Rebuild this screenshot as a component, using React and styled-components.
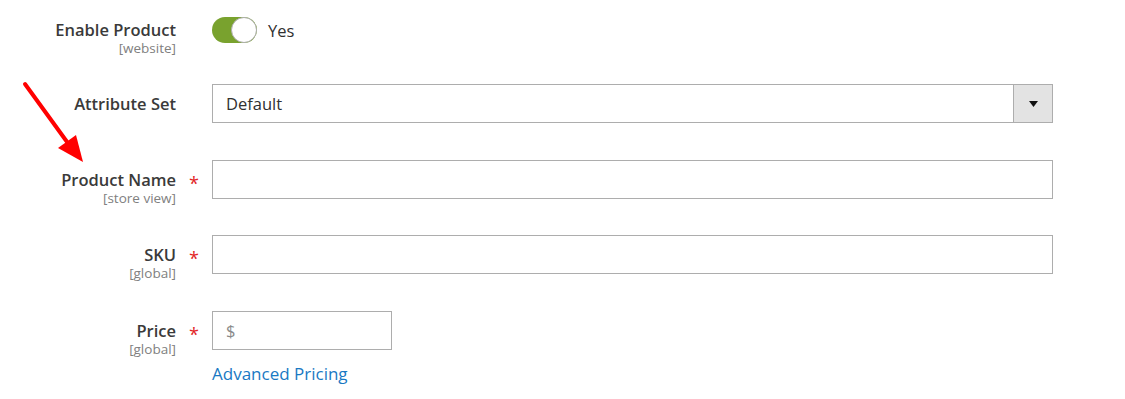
import React from "react";
import styled, { createGlobalStyle } from "styled-components";

const GlobalStyle = createGlobalStyle`
  body {
    margin: 0;
    background: #ffffff;
    font-family: "Open Sans", "Liberation Sans", sans-serif;
    color: #303030;
  }
`;

const Page = styled.div`
  position: relative;
  width: 1125px;
  height: 399px;
  padding-top: 11px;
  box-sizing: border-box;
  overflow: hidden;
`;

const Row = styled.div`
  display: grid;
  grid-template-columns: 176px 36px 841px;
  align-items: start;
  height: 38px;
  margin-bottom: ${(p) => p.gap ?? 38}px;
`;

const LabelBox = styled.div`
  display: flex;
  flex-direction: column;
  align-items: flex-end;
  text-align: right;
  padding-top: ${(p) => p.top || 8}px;
`;

const LabelText = styled.span`
  font-size: 16.5px;
  font-weight: 600;
  line-height: 22px;
  color: #3a3a3a;
`;

const Scope = styled.span`
  font-size: 13.5px;
  line-height: 14px;
  color: #808080;
`;

const Required = styled.span`
  color: #e22626;
  font-size: 18px;
  line-height: 22px;
  padding-top: 12px;
  padding-left: 13px;
`;

const Control = styled.div`
  display: flex;
  flex-direction: column;
  align-items: flex-start;
`;

const ToggleWrap = styled.div`
  display: flex;
  align-items: center;
  gap: 11px;
  height: 38px;
`;

const Track = styled.div`
  width: 45px;
  height: 26px;
  border-radius: 13px;
  background: #79a22e;
  position: relative;
  box-sizing: border-box;
`;

const Knob = styled.div`
  position: absolute;
  right: 0;
  top: 0;
  width: 26px;
  height: 26px;
  border-radius: 50%;
  background: #ffffff;
  border: 1px solid #adadad;
  box-sizing: border-box;
`;

const ToggleText = styled.span`
  font-size: 16.5px;
  color: #303030;
`;

const Input = styled.div`
  width: ${(p) => p.width || 841}px;
  height: 39px;
  box-sizing: border-box;
  border: 1px solid #adadad;
  background: #ffffff;
  display: flex;
  align-items: center;
  font-size: 16.5px;
  color: ${(p) => (p.muted ? "#8a8a8a" : "#303030")};
  padding-left: 13px;
`;

const SelectBox = styled(Input)`
  padding-left: 0;
  justify-content: space-between;
`;

const SelectValue = styled.span`
  padding-left: 13px;
`;

const SelectButton = styled.div`
  width: 38px;
  height: 100%;
  background: #e3e3e3;
  border-left: 1px solid #adadad;
  display: flex;
  align-items: center;
  justify-content: center;
`;

const Link = styled.a`
  margin-top: 12px;
  font-size: 17px;
  color: #1979c3;
  text-decoration: none;
`;

const Arrow = styled.svg`
  position: absolute;
  left: 20px;
  top: 78px;
`;

function Label({ text, scope, top }) {
  return (
    <LabelBox top={top}>
      <LabelText>{text}</LabelText>
      {scope && <Scope>{scope}</Scope>}
    </LabelBox>
  );
}

export default function App() {
  return (
    <Page>
      <GlobalStyle />
      <Row gap={35}>
        <Label text="Enable Product" scope="[website]" top={8} />
        <span />
        <Control>
          <ToggleWrap>
            <Track>
              <Knob />
            </Track>
            <ToggleText>Yes</ToggleText>
          </ToggleWrap>
        </Control>
      </Row>
      <Row>
        <Label text="Attribute Set" top={9} />
        <span />
        <Control>
          <SelectBox>
            <SelectValue>Default</SelectValue>
            <SelectButton>
              <svg width="9" height="6" viewBox="0 0 9 6">
                <path d="M0 0 H9 L4.5 6 Z" fill="#111" />
              </svg>
            </SelectButton>
          </SelectBox>
        </Control>
      </Row>
      <Row gap={37}>
        <Label text="Product Name" scope="[store view]" top={9} />
        <Required>*</Required>
        <Control>
          <Input />
        </Control>
      </Row>
      <Row>
        <Label text="SKU" scope="[global]" top={9} />
        <Required>*</Required>
        <Control>
          <Input />
        </Control>
      </Row>
      <Row gap={0}>
        <Label text="Price" scope="[global]" top={9} />
        <Required>*</Required>
        <Control>
          <Input width={180} muted>
            $
          </Input>
          <Link href="#">Advanced Pricing</Link>
        </Control>
      </Row>
      <Arrow width="70" height="90" viewBox="0 0 70 90">
        <line x1="5" y1="6" x2="50" y2="68" stroke="#ff0000" strokeWidth="4" strokeLinecap="round" />
        <polygon points="63,84 38,70 56,57" fill="#ff0000" />
      </Arrow>
    </Page>
  );
}
